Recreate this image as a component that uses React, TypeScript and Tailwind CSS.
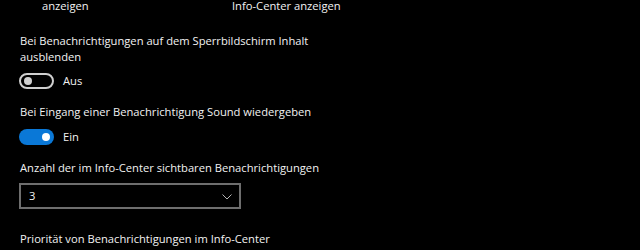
import React from "react";

function Toggle({ on }: { on: boolean }) {
  return on ? (
    <div className="w-[35px] h-[16px] rounded-full bg-[#0a78d7] flex items-center justify-end pr-[4px]">
      <div className="w-[8px] h-[8px] rounded-full bg-white" />
    </div>
  ) : (
    <div className="w-[35px] h-[16px] rounded-full border-2 border-[#cfcfcf] flex items-center pl-[3px]">
      <div className="w-[8px] h-[8px] rounded-full bg-[#cfcfcf]" />
    </div>
  );
}

export default function App() {
  return (
    <div className="w-[640px] h-[250px] bg-black overflow-hidden text-[#f2f2f2] font-['Open_Sans',sans-serif] text-[11.2px] leading-[16px]">
      <div className="flex h-[12px] leading-[12px]">
        <div className="w-[232px] pl-[42px]">anzeigen</div>
        <div>Info-Center anzeigen</div>
      </div>
      <div className="pl-[20px]">
        <div className="mt-[21px]">
          Bei Benachrichtigungen auf dem Sperrbildschirm Inhalt
          <br />
          ausblenden
        </div>
        <div className="mt-[8px] flex items-center gap-[9px] ml-[-1px]">
          <Toggle on={false} />
          <span>Aus</span>
        </div>
        <div className="mt-[15px]">Bei Eingang einer Benachrichtigung Sound wiedergeben</div>
        <div className="mt-[9px] flex items-center gap-[9px] ml-[-1px]">
          <Toggle on={true} />
          <span>Ein</span>
        </div>
        <div className="mt-[15px]">Anzahl der im Info-Center sichtbaren Benachrichtigungen</div>
        <div className="mt-[7px] ml-[-1px] w-[222px] h-[26px] border-2 border-[#6e6e6e] flex items-center justify-between pl-[8px] pr-[7px]">
          <span>3</span>
          <svg width="10" height="6" viewBox="0 0 10 6" className="mt-[1px]">
            <polyline points="0.5,0.5 5,5 9.5,0.5" fill="none" stroke="#b5b5b5" strokeWidth="1" />
          </svg>
        </div>
        <div className="mt-[22px]">Priorität von Benachrichtigungen im Info-Center</div>
      </div>
    </div>
  );
}
